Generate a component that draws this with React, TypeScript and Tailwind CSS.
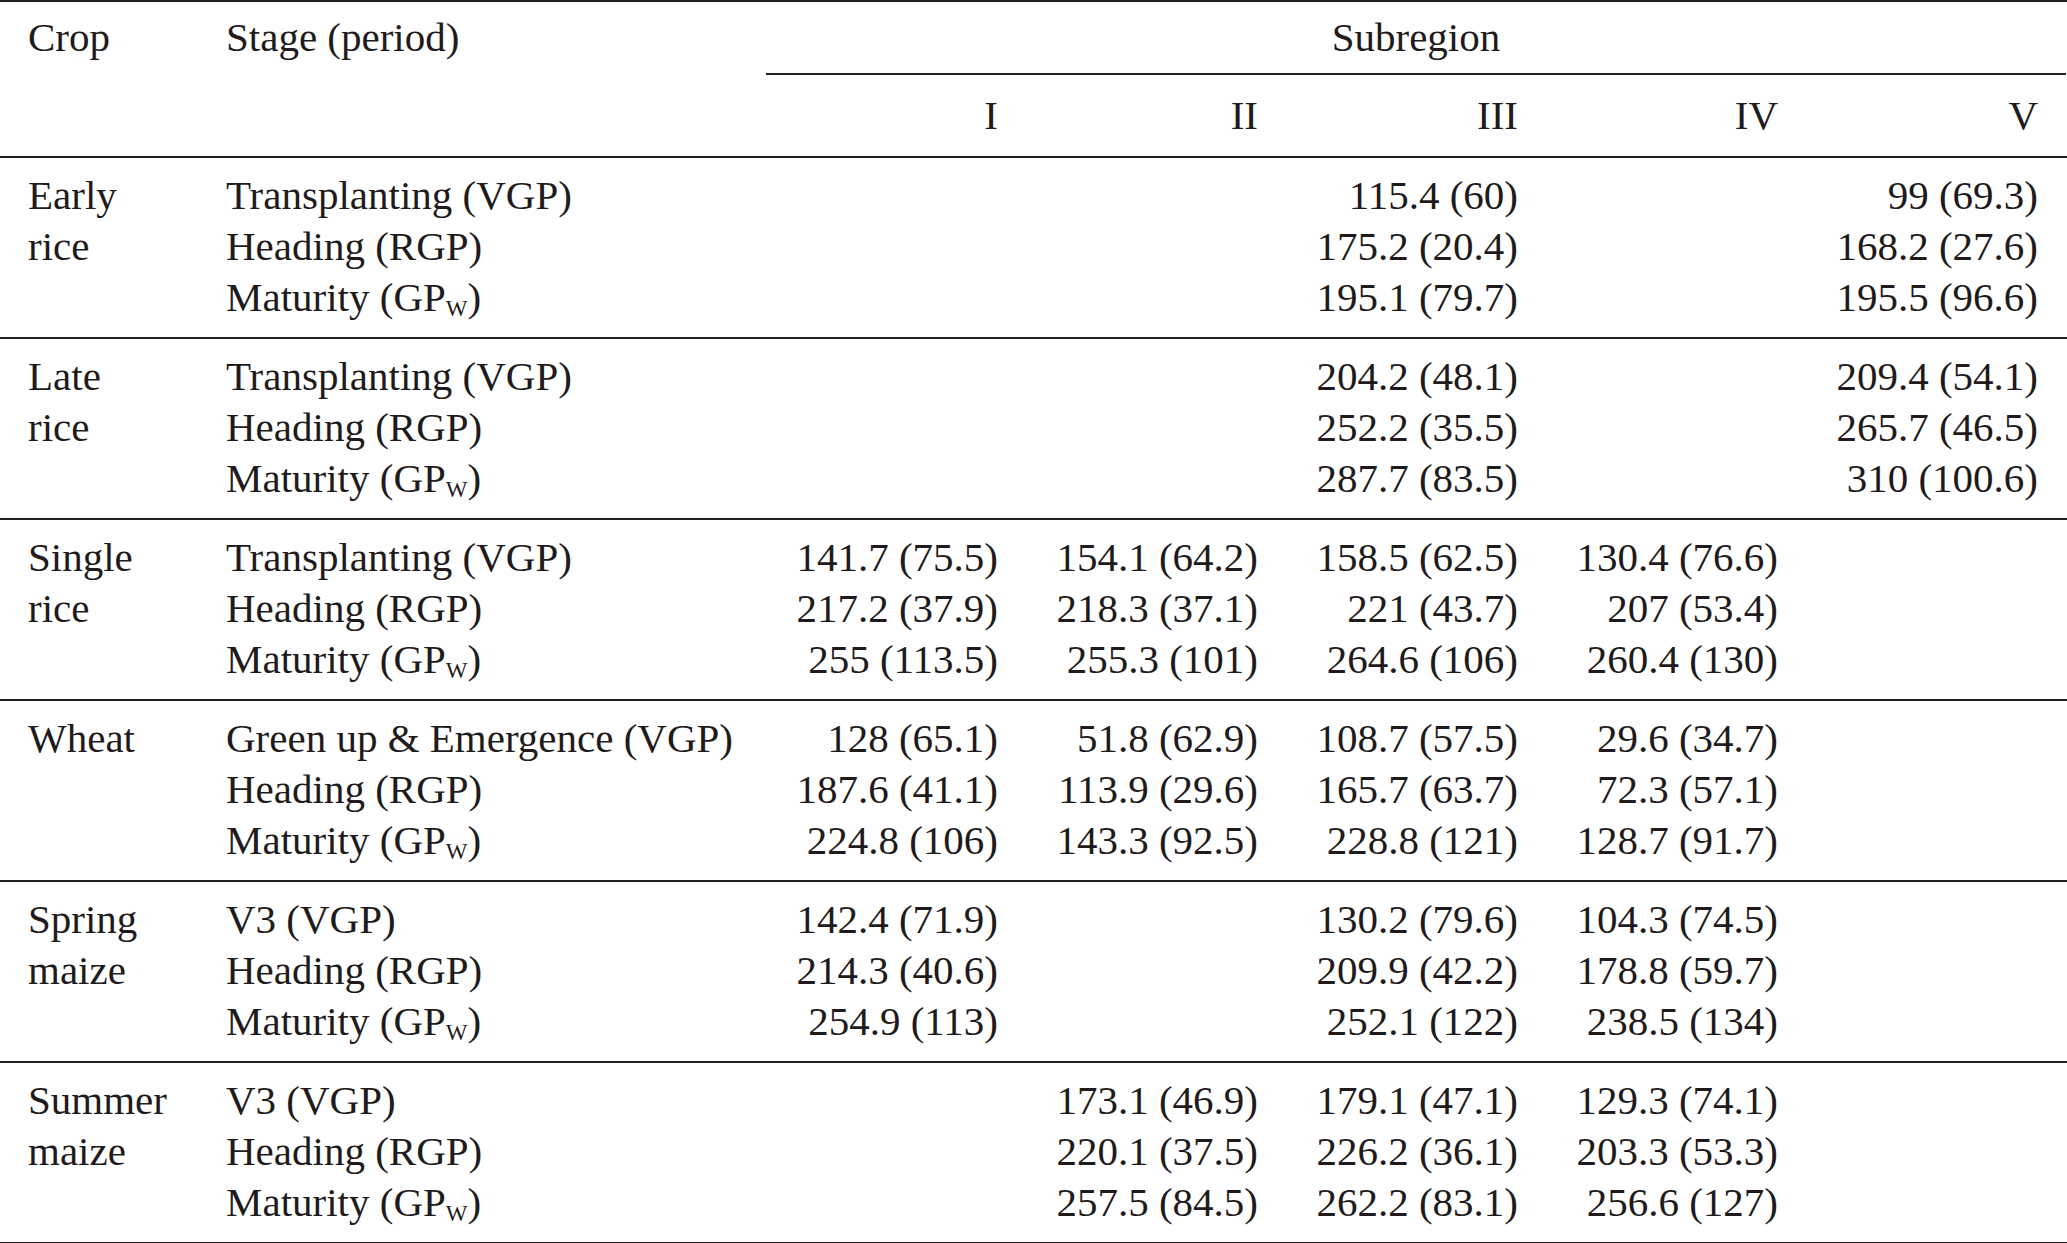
import React from "react"

type Group = {
  crop: string[]
  stages: string[]
  vals: string[][]
}

const groups: Group[] = [
  {
    crop: ["Early", "rice"],
    stages: ["Transplanting (VGP)", "Heading (RGP)", "Maturity"],
    vals: [
      ["", "", "115.4 (60)", "", "99 (69.3)"],
      ["", "", "175.2 (20.4)", "", "168.2 (27.6)"],
      ["", "", "195.1 (79.7)", "", "195.5 (96.6)"],
    ],
  },
  {
    crop: ["Late", "rice"],
    stages: ["Transplanting (VGP)", "Heading (RGP)", "Maturity"],
    vals: [
      ["", "", "204.2 (48.1)", "", "209.4 (54.1)"],
      ["", "", "252.2 (35.5)", "", "265.7 (46.5)"],
      ["", "", "287.7 (83.5)", "", "310 (100.6)"],
    ],
  },
  {
    crop: ["Single", "rice"],
    stages: ["Transplanting (VGP)", "Heading (RGP)", "Maturity"],
    vals: [
      ["141.7 (75.5)", "154.1 (64.2)", "158.5 (62.5)", "130.4 (76.6)", ""],
      ["217.2 (37.9)", "218.3 (37.1)", "221 (43.7)", "207 (53.4)", ""],
      ["255 (113.5)", "255.3 (101)", "264.6 (106)", "260.4 (130)", ""],
    ],
  },
  {
    crop: ["Wheat"],
    stages: ["Green up & Emergence (VGP)", "Heading (RGP)", "Maturity"],
    vals: [
      ["128 (65.1)", "51.8 (62.9)", "108.7 (57.5)", "29.6 (34.7)", ""],
      ["187.6 (41.1)", "113.9 (29.6)", "165.7 (63.7)", "72.3 (57.1)", ""],
      ["224.8 (106)", "143.3 (92.5)", "228.8 (121)", "128.7 (91.7)", ""],
    ],
  },
  {
    crop: ["Spring", "maize"],
    stages: ["V3 (VGP)", "Heading (RGP)", "Maturity"],
    vals: [
      ["142.4 (71.9)", "", "130.2 (79.6)", "104.3 (74.5)", ""],
      ["214.3 (40.6)", "", "209.9 (42.2)", "178.8 (59.7)", ""],
      ["254.9 (113)", "", "252.1 (122)", "238.5 (134)", ""],
    ],
  },
  {
    crop: ["Summer", "maize"],
    stages: ["V3 (VGP)", "Heading (RGP)", "Maturity"],
    vals: [
      ["", "173.1 (46.9)", "179.1 (47.1)", "129.3 (74.1)", ""],
      ["", "220.1 (37.5)", "226.2 (36.1)", "203.3 (53.3)", ""],
      ["", "257.5 (84.5)", "262.2 (83.1)", "256.6 (127)", ""],
    ],
  },
]

const cols = "grid grid-cols-[198px_568px_repeat(5,260px)]"

function Stage({ label }: { label: string }) {
  if (label === "Maturity") {
    return (
      <span>
        Maturity (GP<sub className="text-[23px] align-baseline relative top-[5px]">W</sub>)
      </span>
    )
  }
  return <span>{label}</span>
}

export default function App() {
  return (
    <div className="w-[2067px] min-h-[1243px] bg-white text-[#1f1b1c] font-['Liberation_Serif','Times_New_Roman',serif] text-[41px]">
      {/* header */}
      <div className="border-t-2 border-b-2 border-[#231f20]">
        <div className={`${cols} h-[73px]`}>
          <div className="pl-[28px] pb-[2px] flex items-center">Crop</div>
          <div className="pl-[28px] pb-[2px] flex items-center">Stage (period)</div>
          <div className="col-span-5 border-b-2 border-[#231f20] flex items-center justify-center">Subregion</div>
        </div>
        <div className={`${cols} h-[81px] items-center`}>
          <div />
          <div />
          {["I", "II", "III", "IV", "V"].map(n => (
            <div key={n} className="text-right pr-[28px]">{n}</div>
          ))}
        </div>
      </div>

      {groups.map((g, gi) => (
        <div key={gi} className="pt-[12px] pb-[14px] border-b-2 border-[#231f20]">
          {g.stages.map((s, ri) => (
            <div key={ri} className={`${cols} leading-[51px] whitespace-nowrap`}>
              <div className="pl-[28px]">{g.crop[ri] || ""}</div>
              <div className="pl-[28px]"><Stage label={s} /></div>
              {g.vals[ri].map((v, ci) => (
                <div key={ci} className="text-right pr-[28px]">{v}</div>
              ))}
            </div>
          ))}
        </div>
      ))}
    </div>
  )
}
